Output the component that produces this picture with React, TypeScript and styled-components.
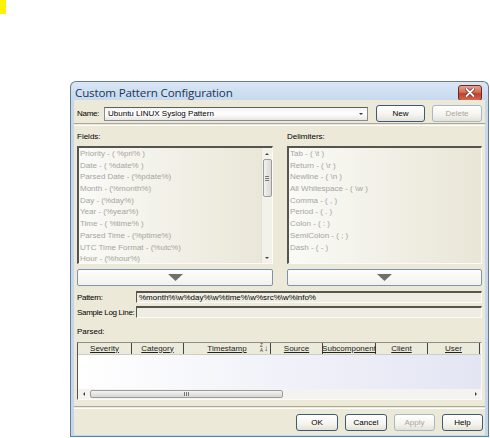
import React from "react";
import styled, { createGlobalStyle } from "styled-components";

const GlobalStyle = createGlobalStyle`
  body {
    margin: 0;
    background: #fff;
    font-family: "Liberation Sans", Arial, sans-serif;
    font-size: 8px;
    color: #000;
  }
`;

const Marker = styled.div`
  width: 6px;
  height: 14px;
  background: #fff200;
`;

const Window = styled.div`
  box-sizing: border-box;
  width: 419px;
  height: 356px;
  margin: 67px 0 0 70px;
  border: 1px solid #6b7a8e;
  border-bottom-color: #3d8fbf;
  border-radius: 6px 6px 0 0;
  background: linear-gradient(#d9e6f5, #c5d8ee 20px, #c3d6ec);
  display: flex;
  flex-direction: column;
`;

const TitleBar = styled.div`
  height: 18px;
  display: flex;
  align-items: center;
  justify-content: space-between;
  padding: 0 6px 0 4px;
`;

const Title = styled.span`
  font-family: "Open Sans", "Liberation Sans", sans-serif;
  font-size: 11.6px;
  color: #1d3557;
  letter-spacing: -0.15px;
  margin-top: 2px;
`;

const CloseButton = styled.div`
  width: 24px;
  height: 16px;
  box-sizing: border-box;
  margin-top: 3px;
  border: 1px solid #6e2a1f;
  border-radius: 3px;
  background: linear-gradient(#e8a393, #d36a52 45%, #c2412a 55%, #d5664c);
  display: flex;
  align-items: center;
  justify-content: center;
`;

const Body = styled.div`
  flex: 1;
  margin: 0 3px 3px;
  padding: 5px 3px 4px;
  background: #ece9d8;
  display: flex;
  flex-direction: column;
`;

const NameRow = styled.div`
  display: flex;
  align-items: center;
  height: 17px;
`;

const Label = styled.span<{ $width?: number }>`
  width: ${(p) => (p.$width ? `${p.$width}px` : "auto")};
  flex-shrink: 0;
  white-space: nowrap;
  letter-spacing: -0.3px;
`;

const Combo = styled.div`
  flex: 1;
  height: 14px;
  box-sizing: border-box;
  border: 1px solid #8c8c8c;
  border-top-color: #5f5f5f;
  background: linear-gradient(#f4f4f4, #ffffff 50%, #e6e6e6);
  display: flex;
  align-items: center;
  padding: 0 4px 0 3px;
  justify-content: space-between;
  margin-right: 8px;
`;

const ComboArrow = styled.span`
  width: 0;
  height: 0;
  border-left: 2px solid transparent;
  border-right: 2px solid transparent;
  border-top: 2px solid #333;
`;

const Button = styled.button<{ $width: number; $disabled?: boolean }>`
  width: ${(p) => p.$width}px;
  height: 17px;
  box-sizing: border-box;
  padding: 0;
  font: inherit;
  color: ${(p) => (p.$disabled ? "#a7a6a0" : "#000")};
  border: 1px solid ${(p) => (p.$disabled ? "#a8b6c6" : "#3e5a78")};
  border-radius: 3px;
  background: linear-gradient(#ffffff, #f4f3ee 60%, #e4e2d6);
  flex-shrink: 0;
`;

const ButtonGap = styled.div`
  width: 7px;
  flex-shrink: 0;
`;

const Etched = styled.div<{ $top: number }>`
  margin-top: ${(p) => p.$top}px;
  height: 1px;
  border-top: 1px solid #aca899;
  border-bottom: 1px solid #fff;
  margin-left: -3px;
  margin-right: -3px;
`;

const Columns = styled.div`
  display: grid;
  grid-template-columns: 196px 1fr;
  column-gap: 14px;
`;

const ColumnLabel = styled.div`
  height: 20px;
  line-height: 21px;
`;

const ListBox = styled.div`
  height: 118px;
  box-sizing: border-box;
  overflow: hidden;
  border-top: 2px solid #55544f;
  border-left: 2px solid #55544f;
  border-right: 1px solid #fbfbf8;
  border-bottom: 1px solid #fbfbf8;
  background: linear-gradient(90deg, #fafaf7, #e9e6d6);
  display: flex;
`;

const Items = styled.div`
  flex: 1;
  padding-left: 1px;
`;

const Item = styled.div`
  height: 11.7px;
  line-height: 11.7px;
  color: #a6a5a0;
  white-space: nowrap;
`;

const VScroll = styled.div`
  width: 10px;
  display: flex;
  flex-direction: column;
  align-items: center;
  background: #f2f1ea;
  border-left: 1px solid #e3e1d6;
`;

const ScrollArrow = styled.div<{ $dir: "up" | "down" | "left" | "right" }>`
  width: 0;
  height: 0;
  ${(p) =>
    p.$dir === "up"
      ? "border-left: 2px solid transparent; border-right: 2px solid transparent; border-bottom: 2px solid #444;"
      : p.$dir === "down"
      ? "border-left: 2px solid transparent; border-right: 2px solid transparent; border-top: 2px solid #444;"
      : p.$dir === "left"
      ? "border-top: 2px solid transparent; border-bottom: 2px solid transparent; border-right: 2px solid #444;"
      : "border-top: 2px solid transparent; border-bottom: 2px solid transparent; border-left: 2px solid #444;"}
`;

const ArrowCell = styled.div`
  height: 11px;
  width: 100%;
  display: flex;
  align-items: center;
  justify-content: center;
`;

const VThumb = styled.div`
  width: 9px;
  height: 38px;
  box-sizing: border-box;
  border: 1px solid #9c9b95;
  border-radius: 2px;
  background: linear-gradient(90deg, #f2f2f2, #d8d8d8);
  display: flex;
  align-items: center;
  justify-content: center;
`;

const Grip = styled.div<{ $vertical?: boolean }>`
  width: ${(p) => (p.$vertical ? "4px" : "5px")};
  height: ${(p) => (p.$vertical ? "5px" : "4px")};
  background: ${(p) =>
    p.$vertical
      ? "repeating-linear-gradient(#777 0 1px, transparent 1px 2px)"
      : "repeating-linear-gradient(90deg, #777 0 1px, transparent 1px 2px)"};
`;

const Spacer = styled.div`
  flex: 1;
`;

const MoveButton = styled.div`
  margin-top: 5px;
  height: 17px;
  box-sizing: border-box;
  border: 1px solid #7b95b0;
  border-radius: 2px;
  background: linear-gradient(#fdfdfc, #f3f2ec);
  display: flex;
  align-items: center;
  justify-content: center;
`;

const FieldRow = styled.div<{ $top: number }>`
  display: flex;
  align-items: center;
  height: 12px;
  margin-top: ${(p) => p.$top}px;
`;

const TextInput = styled.div`
  flex: 1;
  height: 12px;
  box-sizing: border-box;
  border-top: 2px solid #55544f;
  border-left: 1px solid #55544f;
  border-right: 1px solid #fbfbf8;
  border-bottom: 1px solid #fbfbf8;
  background: #efede3;
  padding-left: 2px;
  line-height: 9px;
  white-space: nowrap;
  overflow: hidden;
`;

const ParsedLabel = styled.div`
  height: 24px;
  box-sizing: border-box;
  padding-top: 9px;
  line-height: 10px;
`;

const Table = styled.div`
  height: 58px;
  box-sizing: border-box;
  border-left: 1px solid #55544f;
  border-top: 1px solid #8e8d86;
  border-right: 1px solid #fbfbf8;
  border-bottom: 1px solid #fbfbf8;
  display: flex;
  flex-direction: column;
  background: linear-gradient(90deg, #ffffff, #e3e5f3);
`;

const HeaderRow = styled.div`
  display: flex;
  height: 11px;
  background: #ebeadb;
  border-bottom: 1px solid #cfcdc0;
`;

const HeaderCell = styled.div<{ $width: number }>`
  width: ${(p) => p.$width}px;
  box-sizing: border-box;
  border-right: 1px solid #444;
  display: flex;
  align-items: center;
  justify-content: center;
  position: relative;
  line-height: 10px;
  color: #222;
  & > span {
    text-decoration: underline;
  }
`;

const SortGlyph = styled.div`
  position: absolute;
  right: 2px;
  top: 1px;
  display: flex;
  align-items: center;
  color: #333;
`;

const SortLetters = styled.div`
  display: flex;
  flex-direction: column;
  font-size: 4.5px;
  line-height: 4.5px;
`;

const SortArrow = styled.div`
  font-size: 8px;
  line-height: 9px;
  margin-left: 1px;
`;

const TableBody = styled.div`
  flex: 1;
`;

const HScroll = styled.div`
  height: 10px;
  display: flex;
  align-items: center;
  background: #f4f3ef;
`;

const HArrowCell = styled.div`
  width: 11px;
  height: 100%;
  display: flex;
  align-items: center;
  justify-content: center;
`;

const HThumb = styled.div`
  margin-left: 1px;
  width: 193px;
  height: 8px;
  box-sizing: border-box;
  border: 1px solid #9c9b95;
  border-radius: 2px;
  background: linear-gradient(#f4f4f4, #d6d6d6);
  display: flex;
  align-items: center;
  justify-content: center;
`;

const Footer = styled.div`
  margin-top: 5px;
  display: flex;
  justify-content: flex-end;
  gap: 7px;
  margin-right: -1px;
`;

const fields = [
  "Priority - ( %pri% )",
  "Date - ( %date% )",
  "Parsed Date - (%pdate%)",
  "Month - (%month%)",
  "Day - (%day%)",
  "Year - (%year%)",
  "Time - ( %time% )",
  "Parsed Time - (%ptime%)",
  "UTC Time Format - (%utc%)",
  "Hour - (%hour%)",
];

const delimiters = [
  "Tab - ( \\t )",
  "Return - ( \\r )",
  "Newline - ( \\n )",
  "All Whitespace - ( \\w )",
  "Comma - ( , )",
  "Period - ( . )",
  "Colon - ( : )",
  "SemiColon - ( ; )",
  "Dash - ( - )",
];

const columns: [string, number][] = [
  ["Severity", 54],
  ["Category", 52],
  ["Timestamp", 87],
  ["Source", 52],
  ["Subcomponent", 53],
  ["Client", 52],
  ["User", 52],
];

const DownTriangle = () => (
  <svg width="15" height="7" viewBox="0 0 15 7">
    <polygon points="0,0 15,0 7.5,7" fill="#6f6f6f" />
  </svg>
);

const App: React.FC = () => {
  return (
    <>
      <GlobalStyle />
      <Marker />
      <Window>
        <TitleBar>
          <Title>Custom Pattern Configuration</Title>
          <CloseButton>
            <svg width="10" height="9" viewBox="0 0 10 9">
              <path
                d="M1.5 1 L8.5 8 M8.5 1 L1.5 8"
                stroke="#5a1c12"
                strokeWidth="3.2"
                strokeLinecap="round"
              />
              <path
                d="M1.5 1 L8.5 8 M8.5 1 L1.5 8"
                stroke="#fff"
                strokeWidth="2"
                strokeLinecap="round"
              />
            </svg>
          </CloseButton>
        </TitleBar>
        <Body>
          <NameRow>
            <Label $width={27}>Name:</Label>
            <Combo>
              <span>Ubuntu LINUX Syslog Pattern</span>
              <ComboArrow />
            </Combo>
            <Button $width={49}>New</Button>
            <ButtonGap />
            <Button $width={50} $disabled>
              Delete
            </Button>
          </NameRow>
          <Etched $top={1} />
          <Columns>
            <ColumnLabel>Fields:</ColumnLabel>
            <ColumnLabel>Delimiters:</ColumnLabel>
            <ListBox>
              <Items>
                {fields.map((f) => (
                  <Item key={f}>{f}</Item>
                ))}
              </Items>
              <VScroll>
                <ArrowCell>
                  <ScrollArrow $dir="up" />
                </ArrowCell>
                <VThumb>
                  <Grip $vertical />
                </VThumb>
                <Spacer />
                <ArrowCell>
                  <ScrollArrow $dir="down" />
                </ArrowCell>
              </VScroll>
            </ListBox>
            <ListBox>
              <Items>
                {delimiters.map((d) => (
                  <Item key={d}>{d}</Item>
                ))}
              </Items>
            </ListBox>
            <MoveButton>
              <DownTriangle />
            </MoveButton>
            <MoveButton>
              <DownTriangle />
            </MoveButton>
          </Columns>
          <FieldRow $top={5}>
            <Label $width={59}>Pattern:</Label>
            <TextInput>%month%\w%day%\w%time%\w%src%\w%info%</TextInput>
          </FieldRow>
          <FieldRow $top={3}>
            <Label $width={59}>Sample Log Line:</Label>
            <TextInput />
          </FieldRow>
          <ParsedLabel>Parsed:</ParsedLabel>
          <Table>
            <HeaderRow>
              {columns.map(([name, w]) => (
                <HeaderCell key={name} $width={w}>
                  <span>{name}</span>
                  {name === "Timestamp" && (
                    <SortGlyph>
                      <SortLetters>
                        <div>Z</div>
                        <div>A</div>
                      </SortLetters>
                      <SortArrow>↓</SortArrow>
                    </SortGlyph>
                  )}
                </HeaderCell>
              ))}
            </HeaderRow>
            <TableBody />
            <HScroll>
              <HArrowCell>
                <ScrollArrow $dir="left" />
              </HArrowCell>
              <HThumb>
                <Grip />
              </HThumb>
              <Spacer />
              <HArrowCell>
                <ScrollArrow $dir="right" />
              </HArrowCell>
            </HScroll>
          </Table>
          <Etched $top={6} />
          <Footer>
            <Button $width={42}>OK</Button>
            <Button $width={42}>Cancel</Button>
            <Button $width={41} $disabled>
              Apply
            </Button>
            <Button $width={41}>Help</Button>
          </Footer>
        </Body>
      </Window>
    </>
  );
};

export default App;
